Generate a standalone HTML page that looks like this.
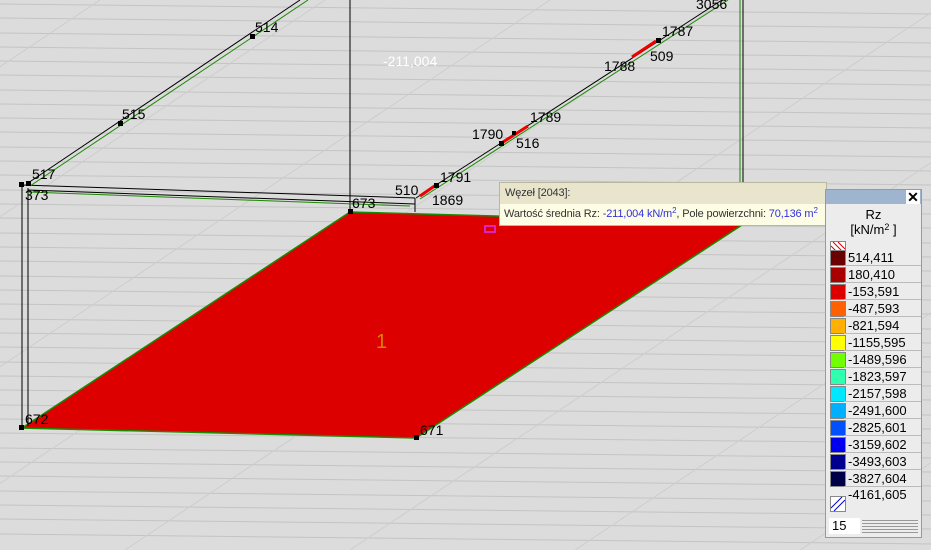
<!DOCTYPE html>
<html style="overflow:hidden;height:550px"><head><meta charset="utf-8"><style>
body{margin:0;width:931px;height:550px;overflow:hidden;background:#dcdcdc;font-family:"Liberation Sans",sans-serif;position:relative}
svg{position:absolute;left:0;top:0}
.lbl{font-size:14px;fill:#000}
sup{line-height:0;vertical-align:4px;font-size:8px}
#tip{position:absolute;left:499px;top:182px;width:326px;height:42px;background:#fdfde6;border:1px solid #b8b8a0;font-size:11px;letter-spacing:-0.15px;color:#333;white-space:nowrap;overflow:hidden}
#tip .h{background:#e8e5cc;height:21px;line-height:21px;padding-left:5px}
#tip .b{line-height:20px;padding-left:4px}
#tip .v{color:#3030e0}
#leg{position:absolute;left:825px;top:189px;width:95px;height:347px;background:#ececec;border:1px solid #999;font-size:13px;overflow:hidden}
#leg .t{height:14px;background:#9fb5cf}
#leg .x{position:absolute;right:1px;top:0;width:14px;height:14px;background:#fff;font-size:14px;line-height:14px;text-align:center;font-weight:bold}
.row{position:absolute;left:0;width:95px;height:17px}
.sw{position:absolute;left:4px;top:1px;width:14px;height:14px;border:1px solid #888}
.row span{position:absolute;left:22px;top:1px;color:#000}
.row i{position:absolute;left:18px;right:0;top:16px;border-top:1px solid #bbb}
</style></head><body>
<svg width="931" height="550">
<g stroke="#c4c4c4" stroke-width="1">
<line x1="0" y1="4" x2="931" y2="14"/><line x1="0" y1="18" x2="931" y2="28"/><line x1="0" y1="33" x2="931" y2="43"/>
<line x1="0" y1="47" x2="931" y2="57"/><line x1="0" y1="61" x2="931" y2="71"/><line x1="0" y1="75" x2="931" y2="85"/>
<line x1="0" y1="90" x2="931" y2="100"/><line x1="0" y1="104" x2="931" y2="114"/><line x1="0" y1="118" x2="931" y2="128"/>
<line x1="0" y1="132" x2="931" y2="142"/><line x1="0" y1="147" x2="931" y2="157"/><line x1="0" y1="161" x2="931" y2="171"/>
<line x1="0" y1="175" x2="931" y2="185"/><line x1="0" y1="190" x2="931" y2="200"/><line x1="0" y1="204" x2="931" y2="214"/>
<line x1="0" y1="218" x2="931" y2="228"/><line x1="0" y1="233" x2="931" y2="243"/><line x1="0" y1="247" x2="931" y2="257"/>
<line x1="0" y1="261" x2="931" y2="271"/><line x1="0" y1="276" x2="931" y2="286"/><line x1="0" y1="290" x2="931" y2="300"/>
<line x1="0" y1="304" x2="931" y2="314"/><line x1="0" y1="319" x2="931" y2="329"/><line x1="0" y1="333" x2="931" y2="343"/>
<line x1="0" y1="347" x2="931" y2="357"/><line x1="0" y1="362" x2="931" y2="372"/><line x1="0" y1="376" x2="931" y2="386"/>
<line x1="0" y1="390" x2="931" y2="400"/><line x1="0" y1="405" x2="931" y2="415"/><line x1="0" y1="419" x2="931" y2="429"/>
<line x1="0" y1="433" x2="931" y2="443"/><line x1="0" y1="448" x2="931" y2="458"/><line x1="0" y1="462" x2="931" y2="472"/>
<line x1="0" y1="476" x2="931" y2="486"/><line x1="0" y1="491" x2="931" y2="501"/><line x1="0" y1="505" x2="931" y2="515"/>
<line x1="0" y1="519" x2="931" y2="529"/><line x1="0" y1="534" x2="931" y2="544"/>
</g>
<g stroke="#cdcdcd" stroke-width="1">
<line x1="-200" y1="200" x2="100" y2="0"/><line x1="-200" y1="350" x2="325" y2="0"/><line x1="-200" y1="500" x2="550" y2="0"/>
<line x1="-100" y1="550" x2="725" y2="0"/><line x1="125" y1="550" x2="950" y2="0"/><line x1="350" y1="550" x2="1175" y2="0"/>
<line x1="575" y1="550" x2="1400" y2="0"/><line x1="800" y1="550" x2="1625" y2="0"/>
</g>
<polygon points="22,428 350,212 745,223 416,438" fill="#dd0000" stroke="#1a8a00" stroke-width="1.5"/>
<g stroke="#000" fill="none" stroke-width="1">
<line x1="22" y1="185" x2="22" y2="428"/><line x1="28" y1="188" x2="28" y2="426"/>
<line x1="22" y1="185" x2="415" y2="198"/><line x1="28" y1="190" x2="415" y2="204"/>
<line x1="350" y1="0" x2="350" y2="212"/><line x1="743" y1="0" x2="743" y2="185"/>
<line x1="28" y1="183" x2="300" y2="0"/><line x1="416" y1="198" x2="722" y2="0"/>
<line x1="415" y1="198" x2="415" y2="212"/>
</g>
<g stroke="#1a8a00" fill="none" stroke-width="1">
<line x1="30" y1="186" x2="308" y2="0"/><line x1="420" y1="199" x2="728" y2="0"/><line x1="740" y1="0" x2="740" y2="185"/>
<line x1="28" y1="192" x2="410" y2="206"/>
</g>
<g stroke="#e00" stroke-width="3"><line x1="420" y1="196" x2="436" y2="185"/><line x1="500" y1="144" x2="528" y2="126"/><line x1="632" y1="57" x2="656" y2="41"/></g>
<g fill="#000"><rect x="19" y="182" width="5" height="5"/><rect x="26" y="181" width="5" height="5"/><rect x="118" y="121" width="5" height="5"/><rect x="250" y="34" width="5" height="5"/>
<rect x="348" y="209" width="5" height="5"/><rect x="19" y="425" width="5" height="5"/><rect x="414" y="435" width="5" height="5"/><rect x="434" y="183" width="5" height="5"/>
<rect x="499" y="141" width="5" height="5"/><rect x="656" y="38" width="5" height="5"/><rect x="512" y="131" width="4" height="4"/></g>
<rect x="485" y="226" width="10" height="6" fill="none" stroke="#e020c0" stroke-width="2"/>
<g class="lbl">
<text x="255" y="32" class="lbl">514</text><text x="122" y="119" class="lbl">515</text><text x="32" y="179" class="lbl">517</text>
<text x="25" y="200" class="lbl">373</text><text x="352" y="208" class="lbl">673</text><text x="395" y="195" class="lbl">510</text>
<text x="432" y="205" class="lbl">1869</text><text x="440" y="182" class="lbl">1791</text><text x="472" y="139" class="lbl">1790</text>
<text x="516" y="148" class="lbl">516</text><text x="530" y="122" class="lbl">1789</text><text x="604" y="71" class="lbl">1788</text>
<text x="650" y="61" class="lbl">509</text><text x="662" y="36" class="lbl">1787</text><text x="696" y="9" class="lbl">3056</text>
<text x="25" y="424" class="lbl">672</text><text x="420" y="435" class="lbl">671</text>
</g>
<text x="383" y="66" fill="#fff" font-size="14">-211,004</text>
<text x="376" y="348" fill="#e08000" font-size="20">1</text>
</svg>
<div id="tip"><div class="h">Węzeł [2043]:</div><div class="b">Wartość średnia Rz: <span class="v">-211,004 kN/m<sup>2</sup></span>, Pole powierzchni: <span class="v">70,136 m<sup>2</sup></span></div></div>
<div id="leg"><div class="t"></div><div class="x">✕</div>
<div style="position:absolute;top:17px;width:95px;text-align:center;line-height:15px">Rz<br>[kN/m<sup style="font-size:9px">2</sup> ]</div>
<svg style="position:absolute;left:4px;top:51px" width="16" height="16"><rect x="0.5" y="0.5" width="15" height="15" fill="#fff" stroke="#888"/><path d="M3 1L15 13M1 5L11 15M8 1L15 8" stroke="#d00" stroke-width="1"/></svg>
<div class="row" style="top:59px"><div class="sw" style="background:#6b0000"></div><span>514,411</span><i></i></div>
<div class="row" style="top:76px"><div class="sw" style="background:#a80000"></div><span>180,410</span><i></i></div>
<div class="row" style="top:93px"><div class="sw" style="background:#dd0000"></div><span>-153,591</span><i></i></div>
<div class="row" style="top:110px"><div class="sw" style="background:#ff6000"></div><span>-487,593</span><i></i></div>
<div class="row" style="top:127px"><div class="sw" style="background:#ffb000"></div><span>-821,594</span><i></i></div>
<div class="row" style="top:144px"><div class="sw" style="background:#ffff00"></div><span>-1155,595</span><i></i></div>
<div class="row" style="top:161px"><div class="sw" style="background:#70ff00"></div><span>-1489,596</span><i></i></div>
<div class="row" style="top:178px"><div class="sw" style="background:#30ffb0"></div><span>-1823,597</span><i></i></div>
<div class="row" style="top:195px"><div class="sw" style="background:#00e8ff"></div><span>-2157,598</span><i></i></div>
<div class="row" style="top:212px"><div class="sw" style="background:#00b0ff"></div><span>-2491,600</span><i></i></div>
<div class="row" style="top:229px"><div class="sw" style="background:#0050ff"></div><span>-2825,601</span><i></i></div>
<div class="row" style="top:246px"><div class="sw" style="background:#0000f0"></div><span>-3159,602</span><i></i></div>
<div class="row" style="top:263px"><div class="sw" style="background:#000090"></div><span>-3493,603</span><i></i></div>
<div class="row" style="top:280px"><div class="sw" style="background:#000048"></div><span>-3827,604</span><i></i></div>
<div class="row" style="top:297px"><span style="top:0">-4161,605</span></div>
<svg style="position:absolute;left:4px;top:306px" width="16" height="16"><rect x="0.5" y="0.5" width="15" height="15" fill="#fff" stroke="#888"/><path d="M1 12L12 1M4 15L15 4" stroke="#00d" stroke-width="1"/></svg>
<div style="position:absolute;left:3px;top:328px;width:28px;height:16px;background:#fff;line-height:16px;padding-left:3px">15</div>
<div style="position:absolute;left:36px;top:330px;width:56px;height:14px;background:repeating-linear-gradient(#999 0 1px,#ececec 1px 3px)"></div>
</div>
</body></html>
